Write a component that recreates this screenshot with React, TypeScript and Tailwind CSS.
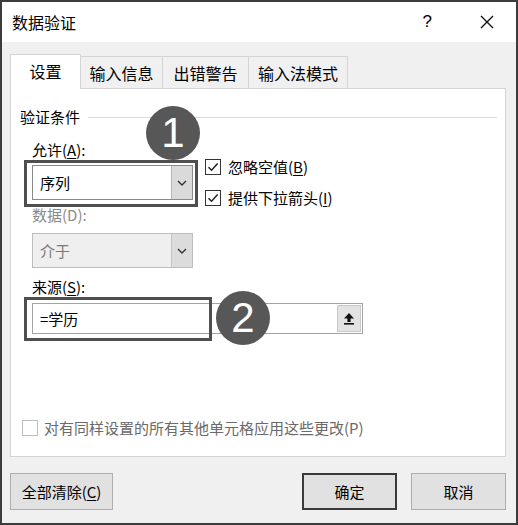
import React from "react";

function Check({ checked = true, light = false }: { checked?: boolean; light?: boolean }) {
  return (
    <div
      className={
        "w-[16px] h-[16px] bg-white border flex items-center justify-center shrink-0 " +
        (light ? "border-[#bdbdbd]" : "border-[#333333]")
      }
    >
      {checked && (
        <svg width="12" height="12" viewBox="0 0 12 12">
          <path d="M1.5 6.2 L4.6 9.2 L10.6 2.4" fill="none" stroke="#222" strokeWidth="1.5" />
        </svg>
      )}
    </div>
  );
}

function Chevron() {
  return (
    <svg width="10" height="6" viewBox="0 0 10 6">
      <path d="M1 1 L5 5 L9 1" fill="none" stroke="#333" strokeWidth="1.4" />
    </svg>
  );
}

export default function App() {
  return (
    <div className="w-[518px] h-[525px] border-2 border-[#3c3c3c] bg-[#f0f0f0] flex flex-col font-['Noto_Sans_CJK_SC',sans-serif] text-black overflow-hidden">
      {/* title bar */}
      <div className="h-[40px] bg-white flex items-center pl-[10px] shrink-0">
        <span className="text-[16px] leading-[20px]">数据验证</span>
        <span className="ml-auto text-[17px] font-['Liberation_Sans',sans-serif]">?</span>
        <svg className="ml-[48px] mr-[22px]" width="14" height="14" viewBox="0 0 14 14">
          <path d="M1 1 L13 13 M13 1 L1 13" stroke="#111" strokeWidth="1.4" />
        </svg>
      </div>

      {/* body */}
      <div className="flex flex-col pl-[8px] pr-[10px]">
        {/* tabs */}
        <div className="flex items-end pt-[11px] h-[46px] text-[16px] leading-[20px]">
          <div className="w-[71px] h-[35px] bg-white border border-b-0 border-[#d4d4d4] flex items-center justify-center relative z-10 -mb-px pb-[2px]">
            设置
          </div>
          <div className="w-[82px] h-[32px] bg-[#f0f0f0] border border-l-0 border-b-0 border-[#d4d4d4] flex items-center justify-center">
            输入信息
          </div>
          <div className="w-[86px] h-[32px] bg-[#f0f0f0] border border-l-0 border-b-0 border-[#d4d4d4] flex items-center justify-center">
            出错警告
          </div>
          <div className="w-[99px] h-[32px] bg-[#f0f0f0] border border-l-0 border-b-0 border-[#d4d4d4] flex items-center justify-center">
            输入法模式
          </div>
        </div>

        {/* panel */}
        <div className="relative h-[369px] bg-white border border-[#d4d4d4] flex flex-col text-[15px] leading-[20px]">
          <div className="flex items-center mt-[18px] pl-[9px]">
            <span>验证条件</span>
            <div className="flex-1 h-px bg-[#dcdcdc] ml-[8px] mr-[8px]" />
          </div>

          <div className="pl-[13px] flex flex-col">
            <div className="flex items-start">
              <div className="w-[174px] flex flex-col">
                <div className="mt-[13px] pl-[8px]">
                  允许(<span className="underline underline-offset-2">A</span>):
                </div>
                <div className="relative mt-[5px] ml-[8px] w-[161px] h-[35px] border border-[#8a8a8a] bg-white flex items-center">
                  <span className="pl-[7px]">序列</span>
                  <div className="ml-auto w-[21px] h-full bg-[#dadada] border-l border-[#b5b5b5] flex items-center justify-center">
                    <Chevron />
                  </div>
                  <div className="absolute left-[-9px] top-[-6px] w-[174px] h-[47px] border-[3px] border-[#4f4f4f]" />
                </div>
                <div className="mt-[5px] pl-[8px] text-[#8a8a8a]">数据(D):</div>
                <div className="mt-[8px] ml-[8px] w-[161px] h-[35px] border border-[#bdbdbd] bg-[#efefef] flex items-center text-[#7a7a7a]">
                  <span className="pl-[7px]">介于</span>
                  <div className="ml-auto w-[21px] h-full bg-[#dcdcdc] border-l border-[#c4c4c4] flex items-center justify-center">
                    <Chevron />
                  </div>
                </div>
              </div>
              <div className="ml-[7px] mt-[32px] flex flex-col gap-[15px]">
                <div className="flex items-center h-[16px]">
                  <Check />
                  <span className="ml-[7px]">
                    忽略空值(<span className="underline underline-offset-2">B</span>)
                  </span>
                </div>
                <div className="flex items-center h-[16px]">
                  <Check />
                  <span className="ml-[7px]">
                    提供下拉箭头(<span className="underline underline-offset-2">I</span>)
                  </span>
                </div>
              </div>
            </div>

            <div className="mt-[9px] pl-[8px]">
              来源(<span className="underline underline-offset-2">S</span>):
            </div>
            <div className="relative mt-[6px] ml-[8px] w-[331px] h-[31px] border border-[#a3a3a3] bg-white flex items-center">
              <span className="pl-[7px]">=学历</span>
              <div className="ml-auto mr-px w-[24px] h-[27px] bg-[#e3e3e3] border border-[#c9c9c9] flex items-center justify-center">
                <svg width="12" height="13" viewBox="0 0 12 13">
                  <path d="M6 1 L11 6.5 L7.6 6.5 L7.6 10 L4.4 10 L4.4 6.5 L1 6.5 Z" fill="#111" />
                  <rect x="1" y="11" width="10" height="1.6" fill="#111" />
                </svg>
              </div>
              <div className="absolute left-[-9px] top-[-7px] w-[188px] h-[44px] border-[3px] border-[#4f4f4f]" />
            </div>
          </div>

          <div className="mt-auto mb-[18px] pl-[11px] flex items-center text-[#6a6a6a]">
            <Check checked={false} light />
            <span className="ml-[6px]">对有同样设置的所有其他单元格应用这些更改(P)</span>
          </div>

          {/* annotation circles */}
          <div className="absolute left-[135px] top-[17px] w-[54px] h-[54px] rounded-full bg-[#575757] flex items-center justify-center text-white text-[42px] leading-none font-['Liberation_Sans',sans-serif]">
            1
          </div>
          <div className="absolute left-[205px] top-[202px] w-[54px] h-[54px] rounded-full bg-[#575757] flex items-center justify-center text-white text-[42px] leading-none font-['Liberation_Sans',sans-serif]">
            2
          </div>
        </div>

        {/* buttons */}
        <div className="flex mt-[16px] text-[15px] leading-[20px]">
          <div className="w-[103px] h-[37px] bg-[#e1e1e1] border border-[#adadad] flex items-center justify-center">
            全部清除(<span className="underline underline-offset-2">C</span>)
          </div>
          <div className="ml-auto w-[95px] h-[37px] bg-[#e1e1e1] border-2 border-[#3a3a3a] flex items-center justify-center">
            确定
          </div>
          <div className="ml-[14px] w-[95px] h-[37px] bg-[#e1e1e1] border border-[#adadad] flex items-center justify-center">
            取消
          </div>
        </div>
      </div>
    </div>
  );
}
